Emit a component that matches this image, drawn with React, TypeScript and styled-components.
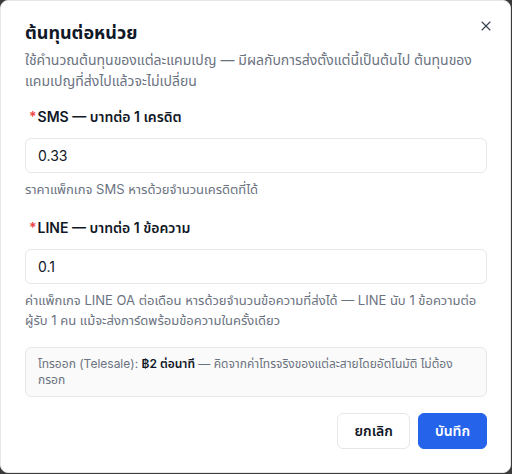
import React, { useState } from 'react';
import styled, { createGlobalStyle } from 'styled-components';
import { X } from 'lucide-react';

const GlobalStyle = createGlobalStyle`
  html, body {
    margin: 0;
    padding: 0;
    background: #3a3a3a;
  }
  body {
    font-family: Inter, "Noto Sans", "Noto Sans Thai", sans-serif;
    color: #111827;
  }
`;

const App = () => {
  const [sms, setSms] = useState('0.33');
  const [line, setLine] = useState('0.1');

  return (
    <>
      <GlobalStyle />
      <Dialog>
        <CloseButton aria-label="close">
          <X size={16} strokeWidth={1.6} />
        </CloseButton>
        <Header>
          <Title>ต้นทุนต่อหน่วย</Title>
          <Description>
            ใช้คำนวณต้นทุนของแต่ละแคมเปญ — มีผลกับการส่งตั้งแต่นี้เป็นต้นไป ต้นทุนของแคมเปญที่ส่งไปแล้วจะไม่เปลี่ยน
          </Description>
        </Header>

        <Form>
          <Field>
            <Label>
              <Required>*</Required>SMS — บาทต่อ 1 เครดิต
            </Label>
            <Input value={sms} onChange={(e) => setSms(e.target.value)} />
            <Help>ราคาแพ็กเกจ SMS หารด้วยจำนวนเครดิตที่ได้</Help>
          </Field>

          <Field>
            <Label>
              <Required>*</Required>LINE — บาทต่อ 1 ข้อความ
            </Label>
            <Input value={line} onChange={(e) => setLine(e.target.value)} />
            <Help>
              ค่าแพ็กเกจ LINE OA ต่อเดือน หารด้วยจำนวนข้อความที่ส่งได้ — LINE นับ 1 ข้อความต่อผู้รับ 1 คน แม้จะส่งการ์ดพร้อมข้อความในครั้งเดียว
            </Help>
          </Field>

          <InfoBox>
            โทรออก (Telesale): <strong>฿2 ต่อนาที</strong> — คิดจากค่าโทรจริงของแต่ละสายโดยอัตโนมัติ ไม่ต้องกรอก
          </InfoBox>
        </Form>

        <Footer>
          <Button>ยกเลิก</Button>
          <Button primary>บันทึก</Button>
        </Footer>
      </Dialog>
    </>
  );
};

export default App;

const Dialog = styled.div`
  position: relative;
  box-sizing: border-box;
  width: 511px;
  height: 473px;
  padding: 20px 23px 23px 24px;
  background: #ffffff;
  border: 1px solid #e5e7eb;
  border-radius: 8px;
  display: flex;
  flex-direction: column;
`;

const CloseButton = styled.button`
  position: absolute;
  top: 16px;
  right: 15px;
  width: 18px;
  height: 18px;
  padding: 0;
  border: none;
  background: transparent;
  color: #374151;
  display: flex;
  align-items: center;
  justify-content: center;
  cursor: pointer;
`;

const Header = styled.div`
  display: flex;
  flex-direction: column;
  gap: 4px;
  padding-right: 8px;
`;

const Title = styled.h2`
  margin: 0;
  font-size: 18px;
  line-height: 24px;
  font-weight: 700;
  color: #111827;
`;

const Description = styled.p`
  margin: 0;
  font-size: 14px;
  line-height: 21px;
  color: #6b7280;
`;

const Form = styled.div`
  display: flex;
  flex-direction: column;
  gap: 19px;
  margin-top: 16px;
`;

const Field = styled.div`
  display: flex;
  flex-direction: column;
`;

const Label = styled.label`
  font-size: 14px;
  line-height: 20px;
  font-weight: 600;
  color: #111827;
  padding-left: 4px;
  margin-bottom: 11px;
`;

const Required = styled.span`
  color: #ef4444;
  margin-right: 1px;
`;

const Input = styled.input`
  box-sizing: border-box;
  height: 35px;
  width: 100%;
  padding: 0 12px;
  border: 1px solid #e5e7eb;
  border-radius: 6px;
  font-family: inherit;
  font-size: 14px;
  color: #111827;
  background: #ffffff;
  outline: none;
`;

const Help = styled.div`
  margin-top: 6px;
  font-size: 13px;
  line-height: 20px;
  color: #6b7280;
`;

const InfoBox = styled.div`
  margin-top: -2px;
  box-sizing: border-box;
  padding: 8px 12px 8px;
  border: 1px solid #e5e7eb;
  border-radius: 6px;
  background: #fafafa;
  font-size: 12px;
  line-height: 16px;
  color: #6b7280;

  strong {
    color: #111827;
    font-weight: 600;
  }
`;

const Footer = styled.div`
  margin-top: auto;
  display: flex;
  justify-content: flex-end;
  gap: 8px;
`;

const Button = styled.button<{ primary?: boolean }>`
  height: 36px;
  padding: 0 16px;
  border-radius: 6px;
  font-family: inherit;
  font-size: 14px;
  font-weight: 600;
  cursor: pointer;
  border: 1px solid ${({ primary }) => (primary ? '#2563eb' : '#e5e7eb')};
  background: ${({ primary }) => (primary ? '#2563eb' : '#ffffff')};
  color: ${({ primary }) => (primary ? '#ffffff' : '#111827')};
`;
